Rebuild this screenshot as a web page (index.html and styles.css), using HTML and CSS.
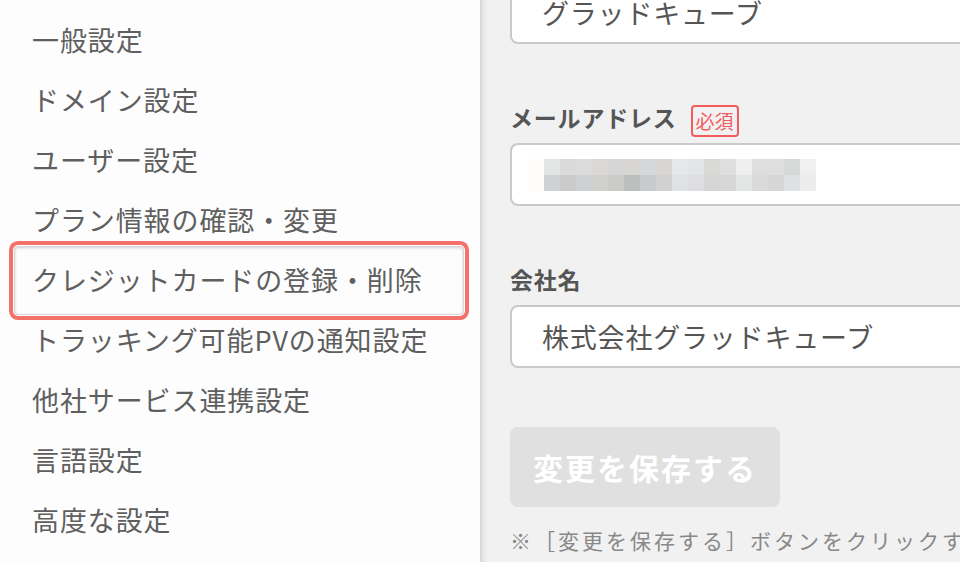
FILE: index.html
```html
<!DOCTYPE html>
<html lang="ja">
<head>
    <meta charset="UTF-8">
    <meta name="viewport" content="width=device-width, initial-scale=1.0">
    <title>設定</title>
    <link rel="stylesheet" href="styles.css">
</head>
<body>
    <div class="layout">
        <!-- Settings menu -->
        <nav class="sidebar">
            <ul class="menu">
                <li class="menu-item">一般設定</li>
                <li class="menu-item">ドメイン設定</li>
                <li class="menu-item">ユーザー設定</li>
                <li class="menu-item">プラン情報の確認・変更</li>
                <li class="menu-item active">クレジットカードの登録・削除</li>
                <li class="menu-item">トラッキング可能PVの通知設定</li>
                <li class="menu-item">他社サービス連携設定</li>
                <li class="menu-item">言語設定</li>
                <li class="menu-item">高度な設定</li>
            </ul>
        </nav>

        <!-- Account form -->
        <main class="content">
            <form class="account-form">
                <div class="field first">
                    <div class="input">グラッドキューブ</div>
                </div>
                <div class="field">
                    <div class="field-label">メールアドレス<span class="required">必須</span></div>
                    <div class="input"><span class="masked"></span></div>
                </div>
                <div class="field">
                    <div class="field-label">会社名</div>
                    <div class="input">株式会社グラッドキューブ</div>
                </div>
                <button type="button" class="save-btn" disabled>変更を保存する</button>
                <p class="note">※［変更を保存する］ボタンをクリックすると変更内容が保存されます。</p>
            </form>
        </main>
    </div>
</body>
</html>
```
FILE: styles.css
```css
body {
    margin: 0;
    font-family: "Noto Sans CJK JP", "Liberation Sans", sans-serif;
    color: #5a5a5a;
    overflow: hidden;
}
.layout {
    display: flex;
    height: 562px;
}
.sidebar {
    width: 480px;
    flex-shrink: 0;
    background-color: #fdfdfd;
}
.menu {
    list-style: none;
    margin: 0;
    padding: 10px 0 0;
}
.menu-item {
    position: relative;
    height: 60px;
    line-height: 60px;
    padding: 0 32px;
    font-size: 27px;
    letter-spacing: 0.9px;
    color: #5f5f5f;
    white-space: nowrap;
}
.menu-item.active::before {
    content: "";
    position: absolute;
    top: -4px;
    bottom: -5px;
    left: 14px;
    right: 16px;
    border: 1px solid #d8d8d8;
    border-radius: 4px;
    box-shadow: 0 0 0 1px #fff, 0 0 0 5px #f4716a, 0 0 2px 6px rgba(255, 255, 255, 0.9), inset 0 1px 3px rgba(0, 0, 0, 0.18);
}
.content {
    flex: 1;
    padding-left: 30px;
    background: linear-gradient(to right, #d4d4d4 0, #e6e6e6 3px, #f1f1f1 8px) #f1f1f1;
}
.account-form {
    margin-top: -19px;
    width: 640px;
}
.field {
    margin-bottom: 59px;
}
.field-label {
    display: flex;
    align-items: flex-start;
    min-height: 36px;
    margin-bottom: 4px;
    line-height: 28px;
    font-size: 23px;
    font-weight: bold;
    letter-spacing: 0.8px;
    color: #555;
}
.required {
    margin: 2px 0 0 14px;
    padding: 0 3px;
    height: 28px;
    line-height: 28px;
    border: 2px solid #f35b5d;
    border-radius: 4px;
    font-size: 19px;
    font-weight: normal;
    letter-spacing: 0;
    color: #f35b5d;
}
.input {
    box-sizing: border-box;
    height: 63px;
    padding: 0 30px;
    display: flex;
    align-items: center;
    background-color: #fff;
    border: 2px solid #c9c9c9;
    border-radius: 8px;
    font-size: 27px;
    letter-spacing: 0.8px;
    color: #555;
}
.masked {
    width: 288px;
    height: 32px;
    background:
        linear-gradient(to right, #fdfcfb 0 16px, #e3e4e4 16px 32px, #dadada 32px 48px, #dbdcdb 48px 64px, #d9d8d7 64px 80px, #d6d6d6 80px 96px, #d8d6d5 96px 112px, #d6d7d8 112px 128px, #d8d6d5 128px 144px, #e6e7e8 144px 160px, #e3e4e6 160px 176px, #d9d9d8 176px 192px, #dedede 192px 208px, #efefef 208px 224px, #dedede 224px 240px, #dedede 240px 256px, #d7d8d8 256px 272px, #f0f0f0 272px 288px) top / 100% 16px no-repeat,
        linear-gradient(to right, #fdfcfb 0 16px, #d0d1d2 16px 32px, #cbcbcb 32px 48px, #ced0d1 48px 64px, #cfcfce 64px 80px, #cbcbca 80px 96px, #bdbfbe 96px 112px, #c9cacb 112px 128px, #d1d1d1 128px 144px, #e0e1e2 144px 160px, #dedee0 160px 176px, #d5d5d5 176px 192px, #d7d7d7 192px 208px, #e3e4e4 208px 224px, #dadada 224px 240px, #d6d6d6 240px 256px, #dfe0e2 256px 272px, #ececec 272px 288px) bottom / 100% 16px no-repeat;
    margin-left: -14px;
}
.save-btn {
    display: block;
    width: 270px;
    height: 80px;
    margin-top: 2px;
    padding: 0;
    border: none;
    border-radius: 8px;
    background-color: #e0e0e0;
    color: #fff;
    font-family: inherit;
    font-size: 30px;
    font-weight: bold;
    letter-spacing: 2px;
}
.note {
    margin: 18px 0 0;
    font-size: 21px;
    letter-spacing: 3px;
    color: #888;
    white-space: nowrap;
}
```
